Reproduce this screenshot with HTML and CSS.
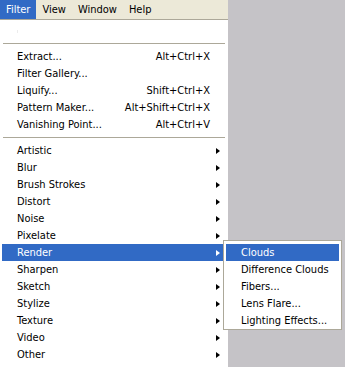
FILE: index.html
```html
<!DOCTYPE html>
<html>
<head>
<meta charset="utf-8">
<link rel="stylesheet" href="styles.css">
</head>
<body>
<div class="app">
  <div class="menubar">
    <span class="mb-item active">Filter</span>
    <span class="mb-item">View</span>
    <span class="mb-item">Window</span>
    <span class="mb-item">Help</span>
  </div>
  <div class="dropdown">
    <div class="row disabled"><span class="label"><span class="tick"></span></span></div>
    <div class="sep"></div>
    <div class="row"><span class="label">Extract...</span><span class="key">Alt+Ctrl+X</span></div>
    <div class="row"><span class="label">Filter Gallery...</span></div>
    <div class="row"><span class="label">Liquify...</span><span class="key">Shift+Ctrl+X</span></div>
    <div class="row"><span class="label">Pattern Maker...</span><span class="key">Alt+Shift+Ctrl+X</span></div>
    <div class="row"><span class="label">Vanishing Point...</span><span class="key">Alt+Ctrl+V</span></div>
    <div class="sep"></div>
    <div class="row sub"><span class="label">Artistic</span><span class="arrow"></span></div>
    <div class="row sub"><span class="label">Blur</span><span class="arrow"></span></div>
    <div class="row sub"><span class="label">Brush Strokes</span><span class="arrow"></span></div>
    <div class="row sub"><span class="label">Distort</span><span class="arrow"></span></div>
    <div class="row sub"><span class="label">Noise</span><span class="arrow"></span></div>
    <div class="row sub"><span class="label">Pixelate</span><span class="arrow"></span></div>
    <div class="row sub selected"><span class="label">Render</span><span class="arrow"></span>
      <div class="submenu">
        <div class="srow selected">Clouds</div>
        <div class="srow">Difference Clouds</div>
        <div class="srow">Fibers...</div>
        <div class="srow">Lens Flare...</div>
        <div class="srow">Lighting Effects...</div>
      </div>
    </div>
    <div class="row sub"><span class="label">Sharpen</span><span class="arrow"></span></div>
    <div class="row sub"><span class="label">Sketch</span><span class="arrow"></span></div>
    <div class="row sub"><span class="label">Stylize</span><span class="arrow"></span></div>
    <div class="row sub"><span class="label">Texture</span><span class="arrow"></span></div>
    <div class="row sub"><span class="label">Video</span><span class="arrow"></span></div>
    <div class="row sub"><span class="label">Other</span><span class="arrow"></span></div>
    <div class="sep"></div>
  </div>
</div>
</body>
</html>
```

FILE: styles.css
```css
html, body {
  margin: 0;
  padding: 0;
  background: #c5c3c7;
  height: 100%;
  overflow: hidden;
}
body {
  font-family: "DejaVu Sans", sans-serif;
  font-stretch: condensed;
  font-size: 11px;
  color: #000;
}
.app {
  width: 228px;
}
.menubar {
  display: flex;
  height: 19px;
  background: #ece9d8;
  border-bottom: 1px solid #aca899;
}
.mb-item {
  padding: 0 6px;
  line-height: 19px;
}
.mb-item.active {
  background: #316ac5;
  color: #fff;
}
.dropdown {
  background: #fff;
  padding: 2px 3px 0 2px;
}
.row {
  position: relative;
  display: flex;
  align-items: center;
  height: 17px;
  padding: 0 5px 0 15px;
}
.row .label {
  flex: 1;
  white-space: nowrap;
}
.row .key {
  white-space: nowrap;
  margin-right: 10px;
}
.row.selected {
  background: #316ac5;
  color: #fff;
}
.tick {
  display: inline-block;
  width: 1px;
  height: 3px;
  background: #ececec;
  vertical-align: middle;
}
.arrow {
  width: 0;
  height: 0;
  border-top: 3.5px solid transparent;
  border-bottom: 3.5px solid transparent;
  border-left: 4px solid #000;
}
.row.selected .arrow {
  border-left-color: #fff;
}
.sep {
  height: 1px;
  background: #aca899;
  margin: 4px 0 4px 1px;
}
.submenu {
  position: absolute;
  left: 221px;
  top: -4px;
  width: 113px;
  background: #fff;
  border: 1px solid #aca899;
  padding: 3px 2px 0 2px;
  color: #000;
}
.srow {
  height: 17px;
  line-height: 17px;
  padding-left: 15px;
  white-space: nowrap;
}
.srow.selected {
  background: #316ac5;
  color: #fff;
}
```
